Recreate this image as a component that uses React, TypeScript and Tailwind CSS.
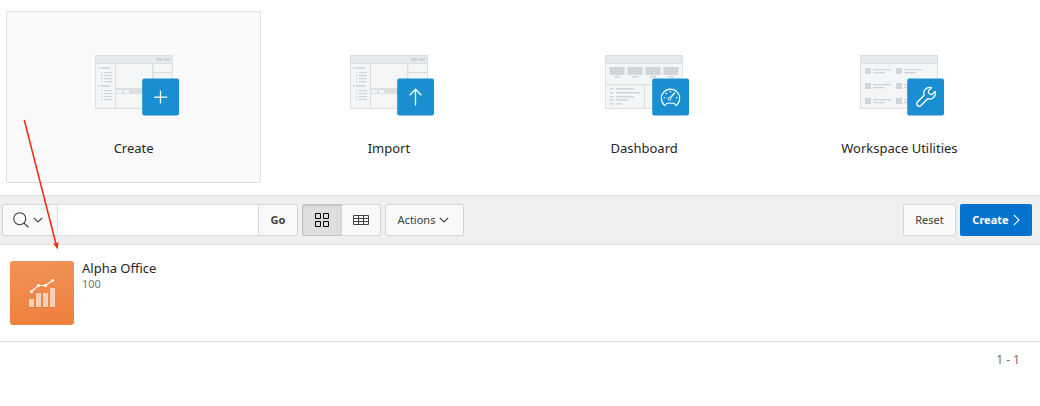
import type { ReactNode } from "react";

type Kind = "create" | "import" | "dashboard" | "utilities";

const LINE = "#dadfe2";
const SOFT = "#cfd6db";

function BuilderScreen() {
  const rows = [17, 20, 23, 26, 35, 38, 41, 44];
  return (
    <g>
      <rect x="61" y="3" width="6.5" height="3" fill={SOFT} />
      <rect x="69" y="3" width="6" height="3" fill={SOFT} />
      <rect x="20" y="9" width="1" height="44" fill={LINE} />
      <rect x="57" y="9" width="1.3" height="24" fill={LINE} />
      <rect x="58" y="17" width="19" height="1.2" fill={LINE} />
      <rect x="21" y="33" width="56" height="6" fill={LINE} />
      <rect x="21" y="35" width="6" height="3" fill="#f3f5f7" />
      <rect x="29" y="35" width="5" height="3" fill="#f3f5f7" />
      {[12, 30].map((y) => (
        <g key={y} fill={SOFT} opacity="0.85">
          <rect x="3" y={y} width="1.7" height="2" />
          <rect x="6" y={y} width="9" height="2" />
        </g>
      ))}
      {rows.map((y) => (
        <g key={y} fill={SOFT}>
          <rect x="6" y={y} width="1.5" height="1.2" />
          <rect x="9" y={y} width="8" height="1.2" />
        </g>
      ))}
    </g>
  );
}

function DashboardScreen() {
  const rows = [
    [33, 18],
    [37, 24],
    [41, 18],
    [44, 12],
    [48, 6],
  ];
  return (
    <g>
      {[4.5, 22.5, 40.5, 58.5].map((x) => (
        <g key={x} fill={SOFT}>
          <rect x={x} y="12" width="15" height="8" />
          <rect x={x + 4.5} y="21" width="6" height="1.6" />
        </g>
      ))}
      <rect x="1" y="29" width="76" height="1.2" fill={LINE} />
      <rect x="39" y="30" width="1.2" height="23" fill={LINE} />
      {rows.map(([y, w]) => (
        <g key={y} fill={SOFT}>
          <rect x="4.5" y={y} width="4" height="1.5" />
          <rect x="11" y={y} width={w} height="1.5" />
        </g>
      ))}
    </g>
  );
}

function UtilitiesScreen() {
  return (
    <g fill={SOFT}>
      {[13, 28, 43].map((y) =>
        [5, 36].map((x) => (
          <g key={`${x}-${y}`}>
            <rect x={x} y={y} width="6" height="6" />
            <rect x={x + 8} y={y + 1} width="18" height="1.3" />
            <rect x={x + 8} y={y + 4} width="12" height="1.3" />
          </g>
        )),
      )}
    </g>
  );
}

const glyphs: Record<Kind, ReactNode> = {
  create: <path d="M18.3 12v13M12 18.7h13" />,
  import: <path d="M18.3 27V11M12.5 16.8l5.8-6 5.8 6" />,
  dashboard: (
    <>
      <path d="M12.7 27.2a9.2 9.2 0 1 1 11.2 0l-1.7-2.1q-3.9-1.1-7.8 0z" strokeWidth="1.1" />
      <circle cx="17.2" cy="20.3" r="1.4" strokeWidth="1" />
      <path d="M18.4 19.1l4.3-4.7" />
      <g fill="#fff" stroke="none">
        <circle cx="12.2" cy="19.4" r=".8" />
        <circle cx="14" cy="15.2" r=".8" />
        <circle cx="18.3" cy="13.2" r=".8" />
        <circle cx="24.4" cy="19.4" r=".8" />
      </g>
    </>
  ),
  utilities: (
    <path
      d="M24.3 9.3a5.8 5.8 0 0 0-7.3 7.5l-7 7a2.5 2.5 0 0 0 3.5 3.5l7-7a5.8 5.8 0 0 0 7.4-7.3l-2.6 2.6a2 2 0 0 1-2.6 0l-1-1a2 2 0 0 1 0-2.6z"
      strokeLinejoin="round"
    />
  ),
};

function TileArt({ kind }: { kind: Kind }) {
  return (
    <svg width="85" height="61" viewBox="0 0 85 61" className="ml-[7px] block" aria-hidden="true">
      <rect x=".5" y=".5" width="77" height="53" fill="#f3f5f7" stroke={LINE} />
      <rect x="1" y="1" width="76" height="7.5" fill="#e6eaed" />
      <rect x="1" y="8" width="76" height="1" fill={LINE} />
      {kind === "dashboard" ? <DashboardScreen /> : kind === "utilities" ? <UtilitiesScreen /> : <BuilderScreen />}
      <g transform="translate(47.2 23.4)">
        <rect width="36.8" height="37" rx="2" fill="#198fd1" />
        <g fill="none" stroke="#fff" strokeWidth="1.3">
          {glyphs[kind]}
        </g>
      </g>
    </svg>
  );
}

const tiles: { kind: Kind; label: string }[] = [
  { kind: "create", label: "Create" },
  { kind: "import", label: "Import" },
  { kind: "dashboard", label: "Dashboard" },
  { kind: "utilities", label: "Workspace Utilities" },
];

function Chevron() {
  return (
    <svg width="10" height="6" viewBox="0 0 10 6" fill="none" stroke="currentColor" strokeWidth="1.2" aria-hidden="true">
      <path d="M.8.8L5 5 9.2.8" />
    </svg>
  );
}

const button = "flex h-8 items-center justify-center border border-[#d5d5d5] bg-[#f9f9f9] text-[#404040]";

export default function App() {
  return (
    <div className="relative bg-white font-['Noto_Sans',sans-serif] text-[11px] text-[#404040]">
      <nav className="grid grid-cols-4 pt-[11px] pr-[13px] pb-3 pl-[6px]">
        {tiles.map(({ kind, label }) => (
          <a
            key={kind}
            href={`#${kind}`}
            className={`flex h-[172px] flex-col items-center rounded-xs border pt-[43px] text-[13px] leading-5 text-[#262626] ${
              kind === "create" ? "border-[#dfdfdf] bg-[#f9f9f9]" : "border-transparent"
            }`}
          >
            <TileArt kind={kind} />
            <span className="mt-[22px]">{label}</span>
          </a>
        ))}
      </nav>

      <div className="flex items-center gap-1 border-y border-[#dfdfdf] bg-[#efefef] py-2 pr-2 pl-[2px]">
        <form className="flex" onSubmit={(e) => e.preventDefault()}>
          <button type="button" aria-label="Search columns" className={`${button} w-14 gap-1 rounded-l-xs pr-1`}>
            <svg width="16" height="16" viewBox="0 0 16 16" fill="none" stroke="currentColor" strokeWidth="1.1" aria-hidden="true">
              <circle cx="6.7" cy="6.7" r="6" />
              <path d="M11 11l4.5 4.5" />
            </svg>
            <Chevron />
          </button>
          <input
            type="text"
            aria-label="Search"
            className="-ml-px h-8 w-[202px] border border-[#dfdfdf] bg-white px-2 text-xs outline-none"
          />
          <button type="submit" className={`${button} -ml-px w-10 rounded-r-xs font-bold`}>
            Go
          </button>
        </form>
        <div className="flex">
          <button
            type="button"
            aria-label="Icon view"
            aria-pressed="true"
            className="flex h-8 w-10 items-center justify-center rounded-l-xs border border-[#c4c4c4] bg-[#dedede] text-black shadow-[inset_0_1px_2px_rgba(0,0,0,0.12)]"
          >
            <svg width="14" height="14" viewBox="0 0 14 14" fill="none" stroke="currentColor" aria-hidden="true">
              <path d="M.5.5h5v5h-5zM8.5.5h5v5h-5zM.5 8.5h5v5h-5zM8.5 8.5h5v5h-5z" />
            </svg>
          </button>
          <button type="button" aria-label="Report view" aria-pressed="false" className={`${button} -ml-px w-10 rounded-r-xs`}>
            <svg width="16" height="10" viewBox="0 0 16 10" fill="none" stroke="currentColor" aria-hidden="true">
              <path d="M.5.5h15v9H.5zM.5 3.5h15M.5 6.5h15M5.5.5v9M10.5.5v9" />
            </svg>
          </button>
        </div>
        <button type="button" className={`${button} w-[79px] gap-1 rounded-xs pr-[2px]`}>
          Actions
          <Chevron />
        </button>
        <button type="button" className={`${button} ml-auto w-[53px] rounded-xs`}>
          Reset
        </button>
        <button type="button" className="flex h-8 w-[72px] items-center justify-center gap-1 rounded-xs bg-[#0572ce] font-bold text-white">
          Create
          <svg width="7" height="12" viewBox="0 0 7 12" fill="none" stroke="currentColor" strokeWidth="1.1" aria-hidden="true">
            <path d="M.8.8L6 6 .8 11.2" />
          </svg>
        </button>
      </div>

      <main>
        <a href="#alpha-office" className="flex gap-2 border-b border-[#dfdfdf] px-[10px] py-4">
          <svg width="64" height="64" viewBox="0 0 64 64" aria-hidden="true">
            <defs>
              <linearGradient id="tile" x1="0" y1="0" x2=".2" y2="1">
                <stop offset="0" stopColor="#f19359" />
                <stop offset="1" stopColor="#ed813e" />
              </linearGradient>
            </defs>
            <rect width="64" height="64" rx="3" fill="url(#tile)" />
            <g fill="#f9d0b7">
              <path d="M19 38h5v8h-5zM26 32h5v14h-5zM33 32h5v14h-5zM40 27h5v19h-5z" />
            </g>
            <path d="M19 46.5h5M26 46.5h5M33 46.5h5M40 46.5h5" stroke="#d67436" strokeWidth=".8" />
            <path d="M21.5 30.5l7-6h7l7-5" fill="none" stroke="#fff" strokeWidth="1.1" />
            <g fill="#fff">
              <circle cx="21.5" cy="30.5" r="1.6" />
              <circle cx="28.5" cy="24.5" r="1.6" />
              <circle cx="35.5" cy="24.5" r="1.6" />
              <circle cx="42.5" cy="19.5" r="1.6" />
            </g>
          </svg>
          <div className="flex flex-col">
            <span className="text-[13px] leading-[14px] text-[#262626]">Alpha Office</span>
            <span className="leading-[18px] text-[#737373]">100</span>
          </div>
        </a>
        <p className="py-[10px] pr-5 text-right text-xs leading-4 text-[#737373]">1 - 1</p>
      </main>

      <svg
        width="60"
        height="252"
        viewBox="0 0 60 252"
        className="pointer-events-none absolute top-0 left-0"
        aria-hidden="true"
      >
        <path d="M24.3 120L56 244" stroke="#f4290b" strokeWidth="1.5" />
        <path d="M57.6 249.5l-4.4-6.2 2.6.2 2.7-1.6z" fill="#f4290b" />
      </svg>
    </div>
  );
}
